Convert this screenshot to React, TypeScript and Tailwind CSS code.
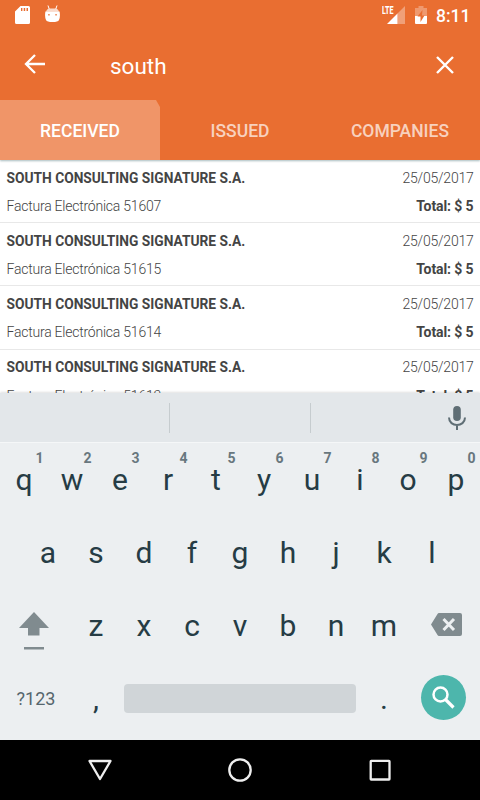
const INVOICES = [
  { id: "51607", date: "25/05/2017" },
  { id: "51615", date: "25/05/2017" },
  { id: "51614", date: "25/05/2017" },
  { id: "51613", date: "25/05/2017" },
];

const TOP_ROW = ["q", "w", "e", "r", "t", "y", "u", "i", "o", "p"];
const HINTS = ["1", "2", "3", "4", "5", "6", "7", "8", "9", "0"];
const HOME_ROW = ["a", "s", "d", "f", "g", "h", "j", "k", "l"];
const BOTTOM_ROW = ["z", "x", "c", "v", "b", "n", "m"];

function StatusBar() {
  return (
    <div className="h-[30px] flex items-center justify-between pl-[15px] pr-[11px] text-white">
      <div className="flex items-center gap-[15px]">
        <svg width="15" height="18" viewBox="0 0 15 18">
          <path
            fillRule="evenodd"
            fill="#fff"
            d="M5.5 0H13.5Q15 0 15 1.5V16.5Q15 18 13.5 18H1.5Q0 18 0 16.5V5.5ZM6 2V5H7.4V2ZM8.7 2V5H10.2V2ZM11.5 2V5H13V2Z"
          />
        </svg>
        <svg width="15" height="18" viewBox="0 0 15 18" className="-mt-[2px]">
          <path d="M3 0.5L4.2 4M12 0.5L10.8 4" stroke="#fff" strokeWidth="1" />
          <path d="M1 6.8Q2 3.5 5 3.5H10Q13 3.5 14 6.8Z" fill="#fff" fillOpacity=".75" />
          <path
            fillRule="evenodd"
            fill="#fff"
            d="M0.4 6.5H14.6Q15.500 12 14 15Q13 17 7.5 17T1 15Q-0.500 12 0.4 6.5ZM3.3 9V10.6H4.6V9ZM10.4 9V10.6H11.7V9Z"
          />
        </svg>
      </div>
      <div className="flex items-center">
        <div className="relative w-[23px] h-[18px]">
          <svg width="23" height="18" viewBox="0 0 23 18">
            <path d="M23 0V18H15.5V7.5Z" fill="#fff" fillOpacity=".35" />
            <path d="M15.5 7.5V18H5Z" fill="#fff" />
          </svg>
          <span className="absolute left-0 top-0 origin-left scale-x-[0.68] text-[10.5px] leading-[9px] font-extrabold">
            LTE
          </span>
        </div>
        <svg width="12" height="18" viewBox="0 0 12 18" className="ml-[10px]">
          <path d="M3.5 0H8.5V2H12V10H0V2H3.5Z" fill="#fff" fillOpacity=".3" />
          <path d="M0 10H12V17Q12 18 11 18H1Q0 18 0 17Z" fill="#fff" />
          <path d="M7.5 4L2.5 10.5H5.5V16L9.5 9.5H7Z" fill="#e96e31" />
        </svg>
        <span className="ml-[9px] mt-[2px] w-[33px] text-[17.5px] leading-5 font-medium whitespace-nowrap">
          8:11
        </span>
      </div>
    </div>
  );
}

function Toolbar() {
  return (
    <div className="h-[70px] flex items-center pl-6 pr-[26px] text-white">
      <svg width="21" height="20" viewBox="0 0 21 20" className="-mt-[2px]" fill="none" stroke="#fff" strokeWidth="2.3">
        <path d="M21 10H2.5M11 1L2 10L11 19" />
      </svg>
      <span className="ml-[65px] flex-1 text-[22.5px] leading-7 mt-[2px]">south</span>
      <svg width="18" height="18" viewBox="0 0 18 18" stroke="#fff" strokeWidth="2.4">
        <path d="M1 1L17 17M17 1L1 17" />
      </svg>
    </div>
  );
}

function Tabs() {
  return (
    <div className="h-[60px] grid grid-cols-3 text-[17.5px] font-medium text-white/70">
      <div className="flex items-center justify-center pt-[2px] text-white bg-[#f09568] [clip-path:polygon(0_0,156px_0,160px_7px,160px_100%,0_100%)]">
        RECEIVED
      </div>
      <div className="flex items-center justify-center pt-[2px]">ISSUED</div>
      <div className="flex items-center justify-center pt-[2px]">COMPANIES</div>
    </div>
  );
}

function InvoiceRow({ id, date }: { id: string; date: string }) {
  return (
    <div className="h-[63.2px] shrink-0 border-b border-[#e8e8e8] px-[6.5px] pt-[7px] text-[14px] text-[#444]">
      <div className="h-[22px] flex items-center justify-between">
        <span className="text-[13.75px] font-bold">SOUTH CONSULTING SIGNATURE S.A.</span>
        <span className="font-light tracking-[-0.23px]">{date}</span>
      </div>
      <div className="mt-[6.5px] h-[22px] flex items-center justify-between">
        <span className="font-light tracking-[-0.23px]">Factura Electrónica {id}</span>
        <span className="font-bold tracking-[-0.1px]">Total: $ 5</span>
      </div>
    </div>
  );
}

function Key({ label, hint }: { label: string; hint?: string }) {
  return (
    <div className="relative w-12 h-[73px] flex items-center justify-center text-[30px] text-[#263c45]">
      {label}
      {hint && (
        <span className="absolute right-[4.5px] top-[7px] text-[14px] leading-4 font-bold text-[#68777e]">
          {hint}
        </span>
      )}
    </div>
  );
}

function Keyboard() {
  return (
    <div className="h-[297px] bg-[#eceff1]">
      <div className="flex">
        {TOP_ROW.map((k, i) => (
          <Key key={k} label={k} hint={HINTS[i]} />
        ))}
      </div>
      <div className="flex justify-center">
        {HOME_ROW.map((k) => (
          <Key key={k} label={k} />
        ))}
      </div>
      <div className="flex">
        <div className="w-[72px] flex items-center pl-[19px]">
          <svg width="30" height="38" viewBox="0 0 30 38" fill="#808b8f" className="mt-[11px]">
            <path d="M15 0L30 16H20.5V23.5H9V16H0Z" />
            <path d="M5 35H25V37.5H5Z" />
          </svg>
        </div>
        {BOTTOM_ROW.map((k) => (
          <Key key={k} label={k} />
        ))}
        <div className="w-[72px] flex items-center pl-[23px]">
          <svg width="31" height="23" viewBox="0 0 31 23" className="-mt-[2px]">
            <path d="M8 0H29Q31 0 31 2V21Q31 23 29 23H8Q7 23 6.5 22L0 11.5L6.5 1Q7 0 8 0Z" fill="#808b8f" />
            <path d="M12.5 6L23 17M23 6L12.5 17" stroke="#eceff1" strokeWidth="3" />
          </svg>
        </div>
      </div>
      <div className="h-[73px] flex items-center">
        <span className="w-[72px] text-center text-[18px] text-[#56666d]">?123</span>
        <Key label="," />
        <div className="ml-1 w-[232px] h-[29px] -mt-px rounded-[4px] bg-[#d0d5d8]" />
        <div className="ml-1">
          <Key label="." />
        </div>
        <div className="ml-[13px] -mt-[2px] size-[45px] rounded-full bg-[#4db6ac] flex items-center justify-center">
          <svg width="23" height="23" viewBox="0 0 23 23" fill="none" stroke="#fff">
            <circle cx="8.5" cy="8.5" r="7" strokeWidth="2.5" />
            <path d="M13.5 13.5L21.5 21.5" strokeWidth="3.2" />
          </svg>
        </div>
      </div>
    </div>
  );
}

function NavBar() {
  return (
    <div className="h-[60px] bg-black flex items-center justify-center gap-[116px]">
      <svg width="24" height="24" viewBox="0 0 24 24" fill="none" stroke="#eee" strokeWidth="2.3" strokeLinejoin="round">
        <path d="M1.5 3H22.5L12 21Z" />
      </svg>
      <svg width="24" height="24" viewBox="0 0 24 24" fill="none" stroke="#eee" strokeWidth="2.3">
        <circle cx="12" cy="12" r="10.7" />
      </svg>
      <svg width="24" height="24" viewBox="0 0 24 24" fill="none" stroke="#eee" strokeWidth="2.3">
        <rect x="2.7" y="2.9" width="18.8" height="18.6" rx=".5" />
      </svg>
    </div>
  );
}

export default function App() {
  return (
    <div className="w-[480px] h-[800px] flex flex-col overflow-hidden bg-white font-['Roboto',sans-serif]">
      <div className="relative z-10 shrink-0 bg-[#e96e31] shadow-[0_1px_2px_rgba(0,60,70,0.35)]">
        <StatusBar />
        <Toolbar />
        <Tabs />
      </div>
      <div className="h-[233px] shrink-0 flex flex-col overflow-hidden">
        {INVOICES.map((invoice) => (
          <InvoiceRow key={invoice.id} {...invoice} />
        ))}
      </div>
      <div className="relative shrink-0">
        <div className="h-[50px] flex items-center bg-[#e3e7ea] border-b border-[#f5f7f8] shadow-[0_-1px_2px_rgba(0,0,0,0.12)]">
          <div className="ml-[169px] w-px h-[30px] bg-[#c6cccf]" />
          <div className="ml-[139.5px] w-px h-[30px] bg-[#c6cccf]" />
          <svg width="18" height="24" viewBox="0 0 18 24" className="ml-[137.5px]">
            <rect x="5.2" y="0" width="7.6" height="15" rx="3.8" fill="#5f6e75" />
            <path d="M1 11.5C1 21.5 17 21.5 17 11.5M9 19V24" fill="none" stroke="#5f6e75" strokeWidth="2" />
          </svg>
        </div>
        <Keyboard />
      </div>
      <NavBar />
    </div>
  );
}
